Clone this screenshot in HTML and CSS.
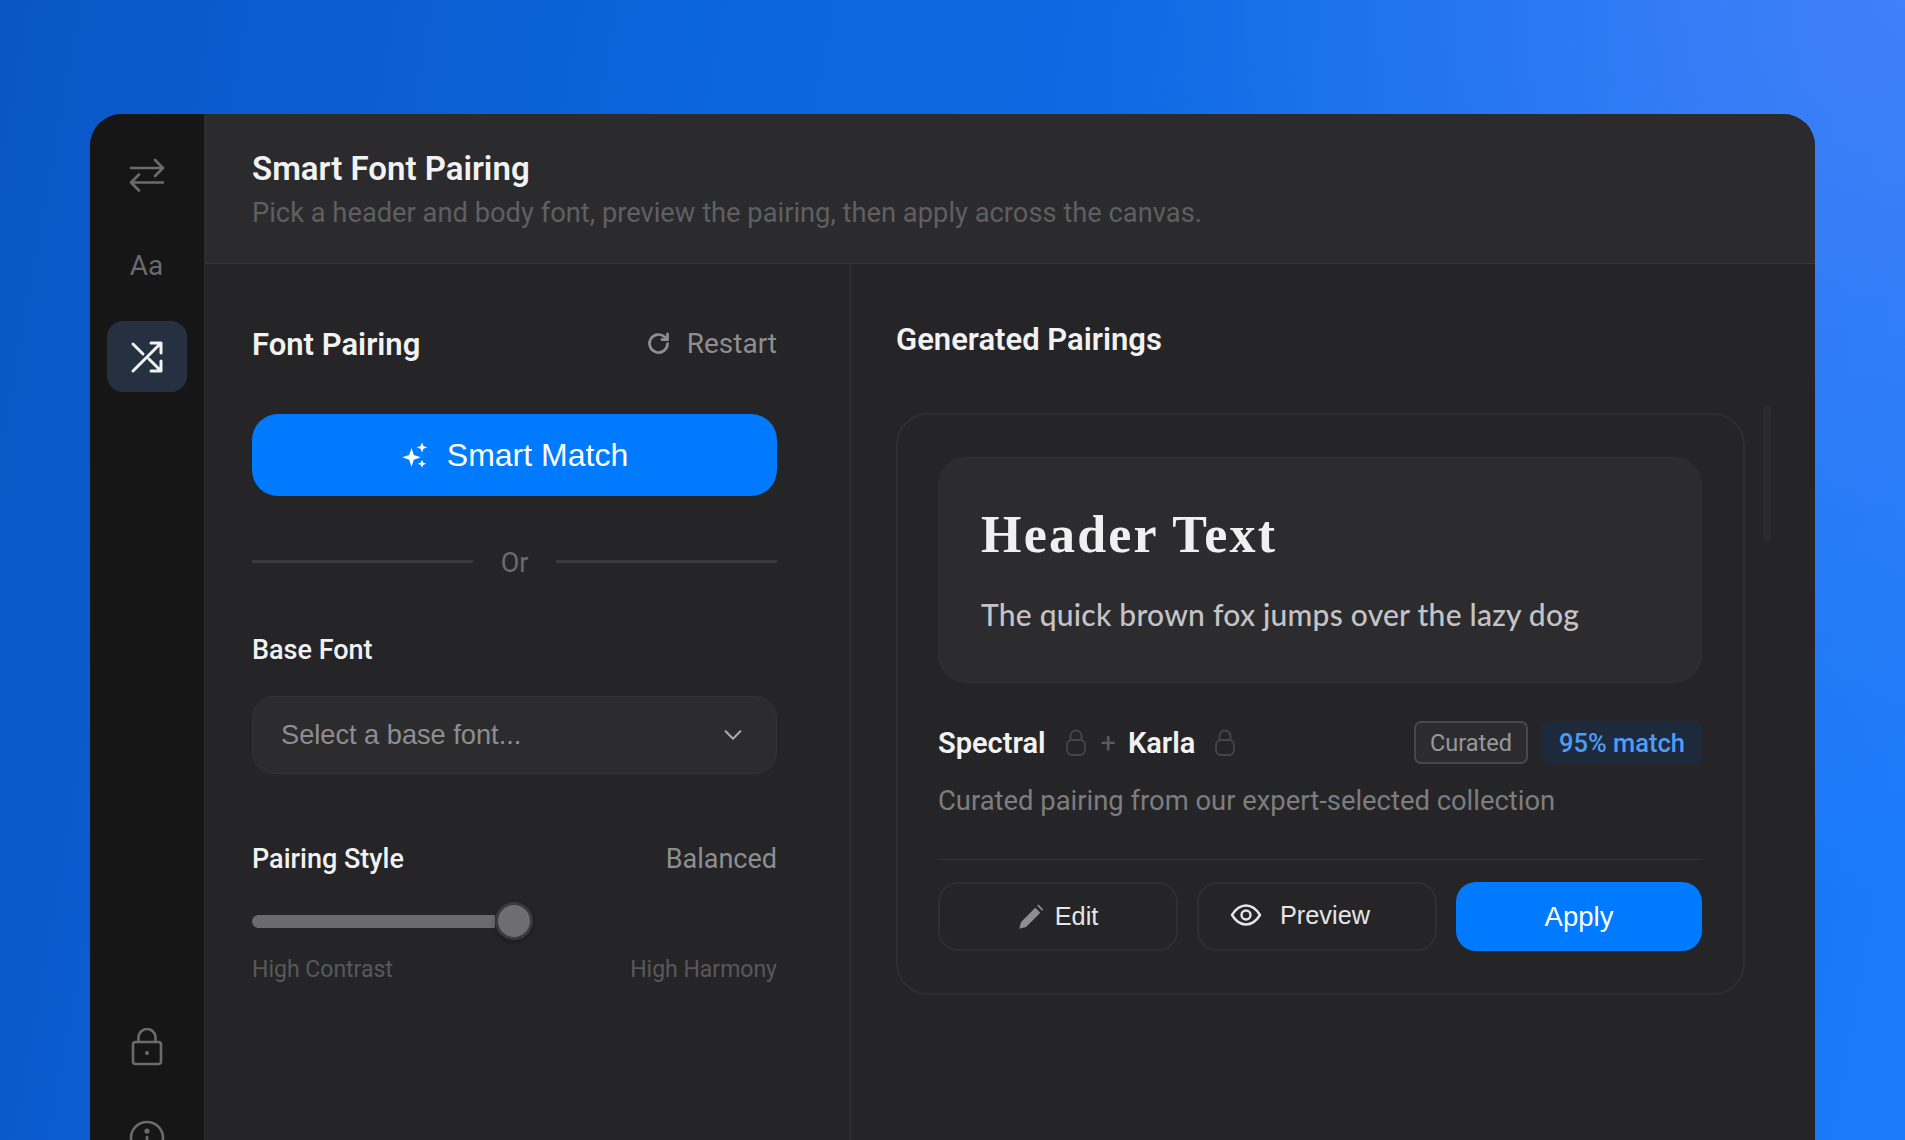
FILE: index.html
```html
<!DOCTYPE html>
<html lang="en">
<head>
<meta charset="utf-8">
<title>Smart Font Pairing</title>
<link rel="stylesheet" href="styles.css">
</head>
<body>
<div class="window">
  <aside class="sidebar">
    <div class="side-item">
      <svg class="side-icon" viewBox="0 0 36 36" fill="none" stroke="currentColor" stroke-width="2.600" stroke-linecap="round" stroke-linejoin="round"><path d="M2 11h32M26 3l8 8-8 8M34 25.500H2M10 17.500l-8 8 8 8"/></svg>
    </div>
    <div class="side-item side-aa">Aa</div>
    <div class="side-item side-active">
      <svg class="side-icon" viewBox="0 0 36 36" fill="none" stroke="currentColor" stroke-width="3" stroke-linecap="round" stroke-linejoin="round"><path d="M4 32L32 4M22 4h10v10M4 5l10 10M20 20l12 12M32 22v10H22"/></svg>
    </div>
    <div class="side-bottom">
      <div class="side-item">
        <svg class="side-icon side-icon-tall" viewBox="0 0 36 38" fill="none" stroke="currentColor" stroke-width="2.600" stroke-linecap="round" stroke-linejoin="round"><rect x="4" y="14" width="28" height="22" rx="2.500"/><path d="M9.500 14V9.500a8.500 8.500 0 0 1 17 0V14"/><circle cx="18" cy="25" r="2" fill="currentColor" stroke="none"/></svg>
      </div>
      <div class="side-item">
        <svg class="side-icon" viewBox="0 0 36 36" fill="none" stroke="currentColor" stroke-width="2.600" stroke-linecap="round" stroke-linejoin="round"><circle cx="18" cy="18" r="16"/><path d="M18 17v8"/><circle cx="18" cy="11" r="1.300" fill="currentColor"/></svg>
      </div>
    </div>
  </aside>
  <main class="main">
    <header class="top">
      <h1 class="top-title">Smart Font Pairing</h1>
      <p class="top-sub">Pick a header and body font, preview the pairing, then apply across the canvas.</p>
    </header>
    <div class="panels">
      <section class="left">
        <div class="left-head">
          <h2 class="panel-title">Font Pairing</h2>
          <span class="restart">
            <svg class="restart-icon" viewBox="0 0 24 24" fill="none" stroke="currentColor" stroke-width="2.400" stroke-linecap="round" stroke-linejoin="round"><path d="M20 12a8 8 0 1 1-2.500-5.800L20 8.500"/><path d="M20 3.500v5h-5"/></svg>
            Restart
          </span>
        </div>
        <button class="smart-btn" type="button">
          <svg class="spark" viewBox="0 0 24 24" fill="currentColor"><path d="M9 6l2 6 6 2-6 2-2 6-2-6-6-2 6-2z"/><path d="M18 1l1.200 3.300L22.500 5.500l-3.300 1.200L18 10l-1.200-3.300L13.500 5.500l3.300-1.200z"/><path d="M18 16l1 2.500 2.500 1-2.500 1-1 2.500-1-2.500-2.500-1 2.500-1z"/></svg>
          Smart Match
        </button>
        <div class="or"><span class="or-line"></span><span class="or-text">Or</span><span class="or-line"></span></div>
        <div class="field-label">Base Font</div>
        <div class="select">
          <span>Select a base font...</span>
          <svg class="chev" viewBox="0 0 24 24" fill="none" stroke="currentColor" stroke-width="2.400" stroke-linecap="round" stroke-linejoin="round"><path d="M4 8l8 8 8-8"/></svg>
        </div>
        <div class="style-head">
          <span class="field-label-inline">Pairing Style</span>
          <span class="style-value">Balanced</span>
        </div>
        <div class="slider">
          <div class="slider-fill"></div>
          <div class="slider-thumb"></div>
        </div>
        <div class="slider-labels"><span>High Contrast</span><span>High Harmony</span></div>
      </section>
      <section class="right">
        <h2 class="panel-title right-title">Generated Pairings</h2>
        <div class="right-body">
          <article class="card">
            <div class="preview">
              <div class="preview-head">Header Text</div>
              <div class="preview-body">The quick brown fox jumps over the lazy dog</div>
            </div>
            <div class="name-row">
              <span class="font-name">Spectral</span>
              <svg class="lock" viewBox="0 0 22 28" fill="none" stroke="currentColor" stroke-width="1.800" stroke-linecap="round" stroke-linejoin="round"><rect x="2" y="11" width="18" height="15" rx="5"/><path d="M5.500 11V7a5.500 5.500 0 0 1 11 0v4"/></svg>
              <span class="plus">+</span>
              <span class="font-name">Karla</span>
              <svg class="lock" viewBox="0 0 22 28" fill="none" stroke="currentColor" stroke-width="1.800" stroke-linecap="round" stroke-linejoin="round"><rect x="2" y="11" width="18" height="15" rx="5"/><path d="M5.500 11V7a5.500 5.500 0 0 1 11 0v4"/></svg>
              <span class="badge badge-curated">Curated</span>
              <span class="badge badge-match">95% match</span>
            </div>
            <p class="desc">Curated pairing from our expert-selected collection</p>
            <div class="actions">
              <button class="act act-edit" type="button">
                <svg class="pencil" viewBox="2 1 21 21" fill="currentColor"><path d="M3 21l1.500-5.500L16 4l4 4L8.500 19.500z"/><path d="M17.500 2.500l1-1 4 4-1 1z"/></svg>
                Edit
              </button>
              <button class="act act-preview" type="button">
                <svg class="eye" viewBox="0 0 32 24" fill="none" stroke="currentColor" stroke-width="2.400" stroke-linecap="round" stroke-linejoin="round"><path d="M2 12C6 5.500 10.500 2.500 16 2.500S26 5.500 30 12c-4 6.500-8.500 9.500-14 9.500S6 18.500 2 12z"/><circle cx="16" cy="12" r="4.500"/></svg>
                Preview
              </button>
              <button class="apply" type="button">Apply</button>
            </div>
          </article>
          <div class="scroll-thumb"></div>
        </div>
      </section>
    </div>
  </main>
</div>
</body>
</html>
```
FILE: styles.css
```css
* { box-sizing: border-box; }
html, body { margin: 0; height: 1140px; overflow: hidden; }
body {
  padding: 114px 90px 0;
  font-family: Roboto, "Liberation Sans", sans-serif;
  background:
    radial-gradient(800px 900px at 100% 0%, #4080f8 0%, rgba(64,128,248,0) 100%),
    linear-gradient(100deg, #0a56c6 0%, #0c66dc 35%, #0f6ee8 70%, #1a7cfb 100%);
}
.window {
  display: flex;
  height: 1090px;
  border-radius: 32px;
  overflow: hidden;
  background: #252527;
  color: #f2f2f2;
}
.sidebar {
  width: 115px;
  flex: none;
  display: flex;
  flex-direction: column;
  align-items: center;
  gap: 20px;
  padding: 25px 1px 31px 0;
  background: #161617;
  border-right: 1px solid #2c2c2e;
}
.side-item {
  width: 80px;
  height: 71px;
  flex: none;
  display: flex;
  align-items: center;
  justify-content: center;
  color: #6b6b6d;
  border-radius: 16px;
}
.side-aa { font-size: 28px; }
.side-active { background: #253040; color: #f2f2f2; }
.side-icon { width: 36px; height: 36px; }
.side-icon-tall { height: 38px; }
.side-bottom { margin-top: auto; display: flex; flex-direction: column; gap: 20px; }
.main { flex: 1; min-width: 0; display: flex; flex-direction: column; }
.top {
  height: 150px;
  padding: 37px 47px 0;
  background: #2b2b2d;
  border-bottom: 1px solid #38383a;
}
.top-title { margin: 0; font-size: 33px; line-height: 36px; font-weight: 600; color: #f2f2f2; }
.top-sub { margin: 11px 0 0; font-size: 27.300px; line-height: 30px; color: #5f5f61; }
.panels { flex: 1; display: flex; }
.left {
  width: 646px;
  flex: none;
  padding: 62px 73px 0 47px;
  border-right: 1px solid #333335;
}
.left-head { display: flex; justify-content: space-between; align-items: center; height: 40px; }
.panel-title { margin: 0; font-size: 31px; line-height: 40px; font-weight: 600; color: #f2f2f2; }
.left-head .panel-title { margin-top: -2px; }
.restart { display: flex; align-items: center; gap: 15px; margin-bottom: 5px; font-size: 28px; color: #8e8e90; }
.restart-icon { width: 27px; height: 27px; }
.smart-btn {
  display: flex;
  align-items: center;
  justify-content: center;
  gap: 18px;
  width: 100%;
  height: 82px;
  margin-top: 48px;
  border: 0;
  border-radius: 26px;
  background: #007aff;
  color: #fff;
  font: 500 32px "Liberation Sans", sans-serif;
}
.spark { width: 28px; height: 28px; }
.or { display: flex; align-items: center; gap: 28px; height: 30px; margin-top: 50px; }
.or-line { flex: 1; height: 3px; background: #3a3a3c; }
.or-text { padding-top: 3px; font-size: 27px; color: #6b6b6d; }
.field-label { margin-top: 59px; font-size: 27px; line-height: 30px; font-weight: 500; color: #f2f2f2; }
.select {
  display: flex;
  align-items: center;
  justify-content: space-between;
  height: 78px;
  margin-top: 31px;
  padding: 0 32px 0 28px;
  border: 1px solid #343436;
  border-radius: 22px;
  background: #2c2c2e;
  color: #8e8e90;
  font: 27.200px "Liberation Sans", sans-serif;
}
.chev { width: 22px; height: 22px; color: #a8a8aa; }
.style-head { display: flex; justify-content: space-between; align-items: center; height: 30px; margin-top: 70px; }
.field-label-inline { font-size: 27px; font-weight: 500; color: #f2f2f2; }
.style-value { font-size: 27px; color: #8e8e90; }
.slider {
  display: flex;
  align-items: center;
  height: 38px;
  margin-top: 28px;
}
.slider-fill { width: 243px; height: 13px; border-radius: 7px 0 0 7px; background: #6b6b6d; }
.slider-thumb {
  width: 38px;
  height: 38px;
  flex: none;
  border-radius: 50%;
  background: #6e6e70;
  border: 3px solid #3a3a3c;
  box-shadow: 0 2px 5px rgba(0, 0, 0, 0.3);
}
.slider-labels {
  display: flex;
  justify-content: space-between;
  margin-top: 17px;
  font-size: 23px;
  line-height: 26px;
  color: #58585a;
}
.right { flex: 1; min-width: 0; padding: 56px 45px 0; }
.right-body { display: flex; align-items: flex-start; margin-top: 53px; }
.card {
  width: 849px;
  flex: none;
  padding: 42px 41px 42px 40px;
  border: 2px solid #2f2f31;
  border-radius: 32px;
}
.preview {
  height: 226px;
  padding: 53px 42px 0;
  border: 1px solid #303032;
  border-radius: 28px;
  background: #2c2c2e;
}
.preview-head {
  font: 700 52px/48px "Liberation Serif", serif;
  letter-spacing: 2.200px;
  color: #f0f0f0;
}
.preview-body { margin-top: 38px; font: 500 30px/34px Lato, sans-serif; letter-spacing: 0.230px; color: #c4c4c6; }
.name-row { display: flex; align-items: center; height: 43px; margin-top: 38px; }
.font-name { font-size: 29px; font-weight: 600; color: #f2f2f2; }
.lock { width: 22px; height: 28px; margin-left: 19px; color: #464648; }
.plus { margin: 0 12px 0 14px; font-size: 27px; color: #5a5a5c; }
.badge {
  display: flex;
  align-items: center;
  height: 43px;
  border-radius: 7px;
}
.badge-curated { margin-left: auto; padding: 0 14px; font-size: 23.500px; border: 2px solid #48484a; background: #2c2c2e; color: #98989a; }
.badge-match { margin-left: 14px; padding: 0 17px; font-size: 25.500px; background: #1d2a3c; color: #4f9cf5; font-weight: 500; }
.desc { margin: 22px 0 0; font-size: 27.400px; line-height: 30px; color: #7d7d7f; }
.actions {
  display: grid;
  grid-template-columns: 240px 240px 1fr;
  gap: 19px;
  margin-top: 43px;
  padding-top: 22px;
  border-top: 1px solid #333335;
}
.act {
  display: flex;
  align-items: center;
  justify-content: center;
  gap: 11px;
  height: 69px;
  border: 2px solid #2f2f31;
  border-radius: 20px;
  background: #252527;
  color: #e6e6e6;
  font: 25.300px "Liberation Sans", sans-serif;
}
.act-preview { gap: 18px; padding: 0 34px 3px 0; }
.pencil { width: 26px; height: 26px; color: #8e8e90; }
.eye { width: 32px; height: 24px; color: #e6e6e6; }
.apply {
  height: 69px;
  border: 0;
  border-radius: 20px;
  background: #007aff;
  color: #fff;
  font: 500 27.500px "Liberation Sans", sans-serif;
}
.scroll-thumb {
  width: 8px;
  height: 136px;
  margin: -8px 0 0 18px;
  flex: none;
  border-radius: 4px;
  background: #2b2b2d;
}
```
